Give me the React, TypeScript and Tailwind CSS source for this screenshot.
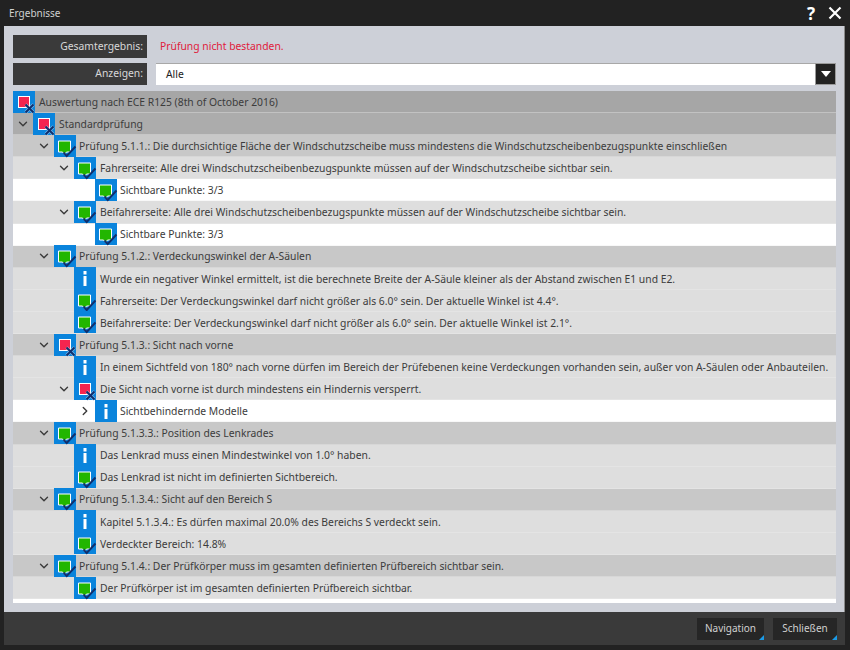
import { ChevronDown, ChevronRight } from "lucide-react";

type Status = "fail" | "pass" | "info";

interface Row {
  depth: 0 | 1 | 2 | 3 | 4;
  status: Status;
  text: string;
  open?: boolean;
  closed?: boolean;
}

const rows: Row[] = [
  { depth: 0, status: "fail", text: "Auswertung nach ECE R125 (8th of October 2016)" },
  { depth: 1, status: "fail", open: true, text: "Standardprüfung" },
  { depth: 2, status: "pass", open: true, text: "Prüfung 5.1.1.: Die durchsichtige Fläche der Windschutzscheibe muss mindestens die Windschutzscheibenbezugspunkte einschließen" },
  { depth: 3, status: "pass", open: true, text: "Fahrerseite: Alle drei Windschutzscheibenbezugspunkte müssen auf der Windschutzscheibe sichtbar sein." },
  { depth: 4, status: "pass", text: "Sichtbare Punkte: 3/3" },
  { depth: 3, status: "pass", open: true, text: "Beifahrerseite: Alle drei Windschutzscheibenbezugspunkte müssen auf der Windschutzscheibe sichtbar sein." },
  { depth: 4, status: "pass", text: "Sichtbare Punkte: 3/3" },
  { depth: 2, status: "pass", open: true, text: "Prüfung 5.1.2.: Verdeckungswinkel der A-Säulen" },
  { depth: 3, status: "info", text: "Wurde ein negativer Winkel ermittelt, ist die berechnete Breite der A-Säule kleiner als der Abstand zwischen E1 und E2." },
  { depth: 3, status: "pass", text: "Fahrerseite: Der Verdeckungswinkel darf nicht größer als 6.0° sein. Der aktuelle Winkel ist 4.4°." },
  { depth: 3, status: "pass", text: "Beifahrerseite: Der Verdeckungswinkel darf nicht größer als 6.0° sein. Der aktuelle Winkel ist 2.1°." },
  { depth: 2, status: "fail", open: true, text: "Prüfung 5.1.3.: Sicht nach vorne" },
  { depth: 3, status: "info", text: "In einem Sichtfeld von 180° nach vorne dürfen im Bereich der Prüfebenen keine Verdeckungen vorhanden sein, außer von A-Säulen oder Anbauteilen." },
  { depth: 3, status: "fail", open: true, text: "Die Sicht nach vorne ist durch mindestens ein Hindernis versperrt." },
  { depth: 4, status: "info", closed: true, text: "Sichtbehindernde Modelle" },
  { depth: 2, status: "pass", open: true, text: "Prüfung 5.1.3.3.: Position des Lenkrades" },
  { depth: 3, status: "info", text: "Das Lenkrad muss einen Mindestwinkel von 1.0° haben." },
  { depth: 3, status: "pass", text: "Das Lenkrad ist nicht im definierten Sichtbereich." },
  { depth: 2, status: "pass", open: true, text: "Prüfung 5.1.3.4.: Sicht auf den Bereich S" },
  { depth: 3, status: "info", text: "Kapitel 5.1.3.4.: Es dürfen maximal 20.0% des Bereichs S verdeckt sein." },
  { depth: 3, status: "pass", text: "Verdeckter Bereich: 14.8%" },
  { depth: 2, status: "pass", open: true, text: "Prüfung 5.1.4.: Der Prüfkörper muss im gesamten definierten Prüfbereich sichtbar sein." },
  { depth: 3, status: "pass", text: "Der Prüfkörper ist im gesamten definierten Prüfbereich sichtbar." },
];

const rowBg = ["bg-[#a6a6a6]", "bg-[#acacac]", "bg-[#c8c8c8]", "bg-[#dedede]", "bg-white"];
const rowIndent = ["pl-0", "pl-5", "pl-[41px]", "pl-[61px]", "pl-[82px]"];
const textGap = ["ml-1", "ml-1", "ml-[3px]", "ml-[4px]", "ml-[3px]"];

function StatusIcon({ status }: { status: Status }) {
  if (status === "info") {
    return (
      <span className="h-[22px] w-[22px] shrink-0 bg-[#0a84dc]">
        <svg width="22" height="22" viewBox="0 0 22 22">
          <rect x="9.5" y="4" width="3" height="3.5" fill="#fff" />
          <rect x="9.5" y="9" width="3" height="10" fill="#fff" />
        </svg>
      </span>
    );
  }
  return (
    <span className="relative z-10 h-[22px] w-[22px] shrink-0 bg-[#0a84dc]">
      <svg width="22" height="22" viewBox="0 0 22 22" className="overflow-visible">
        {status === "pass" ? (
          <>
            <path d="M4.5 6h12v11h-4l-2 2.5-2-2.5h-4z" fill="#22b600" stroke="#fff" strokeWidth="1" />
            <path d="M9.5 17.5l3.2 3.5 8.8-9.5" fill="none" stroke="#0f2f6e" strokeWidth="1.9" />
          </>
        ) : (
          <>
            <rect x="5.5" y="5.5" width="11" height="11" fill="#f5254f" stroke="#fff" strokeWidth="1" />
            <path d="M12.5 13.5l8 8M20.5 13.5l-8 8" fill="none" stroke="#bcdcf5" strokeOpacity="0.6" strokeWidth="3.2" />
            <path d="M12.5 13.5l8 8M20.5 13.5l-8 8" fill="none" stroke="#0f2f6e" strokeWidth="2" />
          </>
        )}
      </svg>
    </span>
  );
}

function TreeRow({ row }: { row: Row }) {
  return (
    <div className={`flex h-[22.1px] items-center border-b border-[#eeeeee]/40 ${rowBg[row.depth]} ${rowIndent[row.depth]}`}>
      {row.open ? (
        <ChevronDown size={14} strokeWidth={2.4} className="-ml-[17px] mr-[3px] text-[#3a3a3a]" />
      ) : null}
      {row.closed ? (
        <ChevronRight size={14} strokeWidth={2.4} className="-ml-[17px] mr-[3px] text-[#3a3a3a]" />
      ) : null}
      <StatusIcon status={row.status} />
      <span className={`whitespace-nowrap pt-[2px] text-[#3c3c3c] ${textGap[row.depth]}`}>{row.text}</span>
    </div>
  );
}

function FooterButton({ label, width }: { label: string; width: string }) {
  return (
    <button type="button" className={`relative flex h-[22px] items-center justify-center bg-[#262626] text-[10px] text-[#d0d0d0] ${width}`}>
      {label}
      <span className="absolute bottom-0 right-0 h-0 w-0 border-b-[5px] border-l-[5px] border-b-[#1a9ae6] border-l-transparent" />
    </button>
  );
}

export default function App() {
  return (
    <div className="flex h-[650px] w-[850px] flex-col overflow-hidden bg-[#222222] text-[10.35px] [font-family:'Noto_Sans',sans-serif]">
      <div className="flex h-[26px] shrink-0 items-center justify-between pl-[9px] pr-[8px]">
        <span className="text-[10px] text-[#d0d0d0]">Ergebnisse</span>
        <div className="flex items-center gap-[13px] text-white">
          <span className="text-[17px] font-bold leading-none">?</span>
          <svg width="14" height="14" viewBox="0 0 14 14">
            <path d="M1.5 1.5l11 11M12.5 1.5l-11 11" fill="none" stroke="#fff" strokeWidth="2.2" />
          </svg>
        </div>
      </div>

      <div className="ml-1 mr-[5px] flex h-[586px] shrink-0 flex-col border-r border-[#8a8a8a] bg-[#cdd0d8] pl-[9px] pr-[8px] pt-[9px]">
        <div className="flex h-[23px] items-center">
          <div className="flex h-[23px] w-[134px] items-center justify-end bg-[#3a3a3a] pr-1 text-[#d8d8d8]">Gesamtergebnis:</div>
          <span className="ml-[13px] text-[#e0203c]">Prüfung nicht bestanden.</span>
        </div>
        <div className="mt-[5px] flex h-[22px] items-center">
          <div className="flex h-[22px] w-[134px] items-center justify-end bg-[#3a3a3a] pr-1 text-[#d8d8d8]">Anzeigen:</div>
          <div className="ml-[9px] flex h-[22px] flex-1 items-center border-t border-[#a8a8a8] bg-white pl-2.5 text-[#222222]">Alle</div>
          <div className="flex h-[22px] w-[21px] items-center justify-center border border-[#9a9a9a] bg-[#222222]">
            <span className="h-0 w-0 border-x-[5px] border-t-[6px] border-x-transparent border-t-white" />
          </div>
        </div>
        <div className="mt-[6px]">
          {rows.map((row, i) => (
            <TreeRow key={i} row={row} />
          ))}
          <div className="h-[4px] bg-white" />
        </div>
      </div>

      <div className="ml-1 mr-[5px] flex h-[33px] shrink-0 items-center justify-end gap-[9px] bg-[#3a3a3a] pr-[8px]">
        <FooterButton label="Navigation" width="w-[67px]" />
        <FooterButton label="Schließen" width="w-[64px]" />
      </div>
    </div>
  );
}
